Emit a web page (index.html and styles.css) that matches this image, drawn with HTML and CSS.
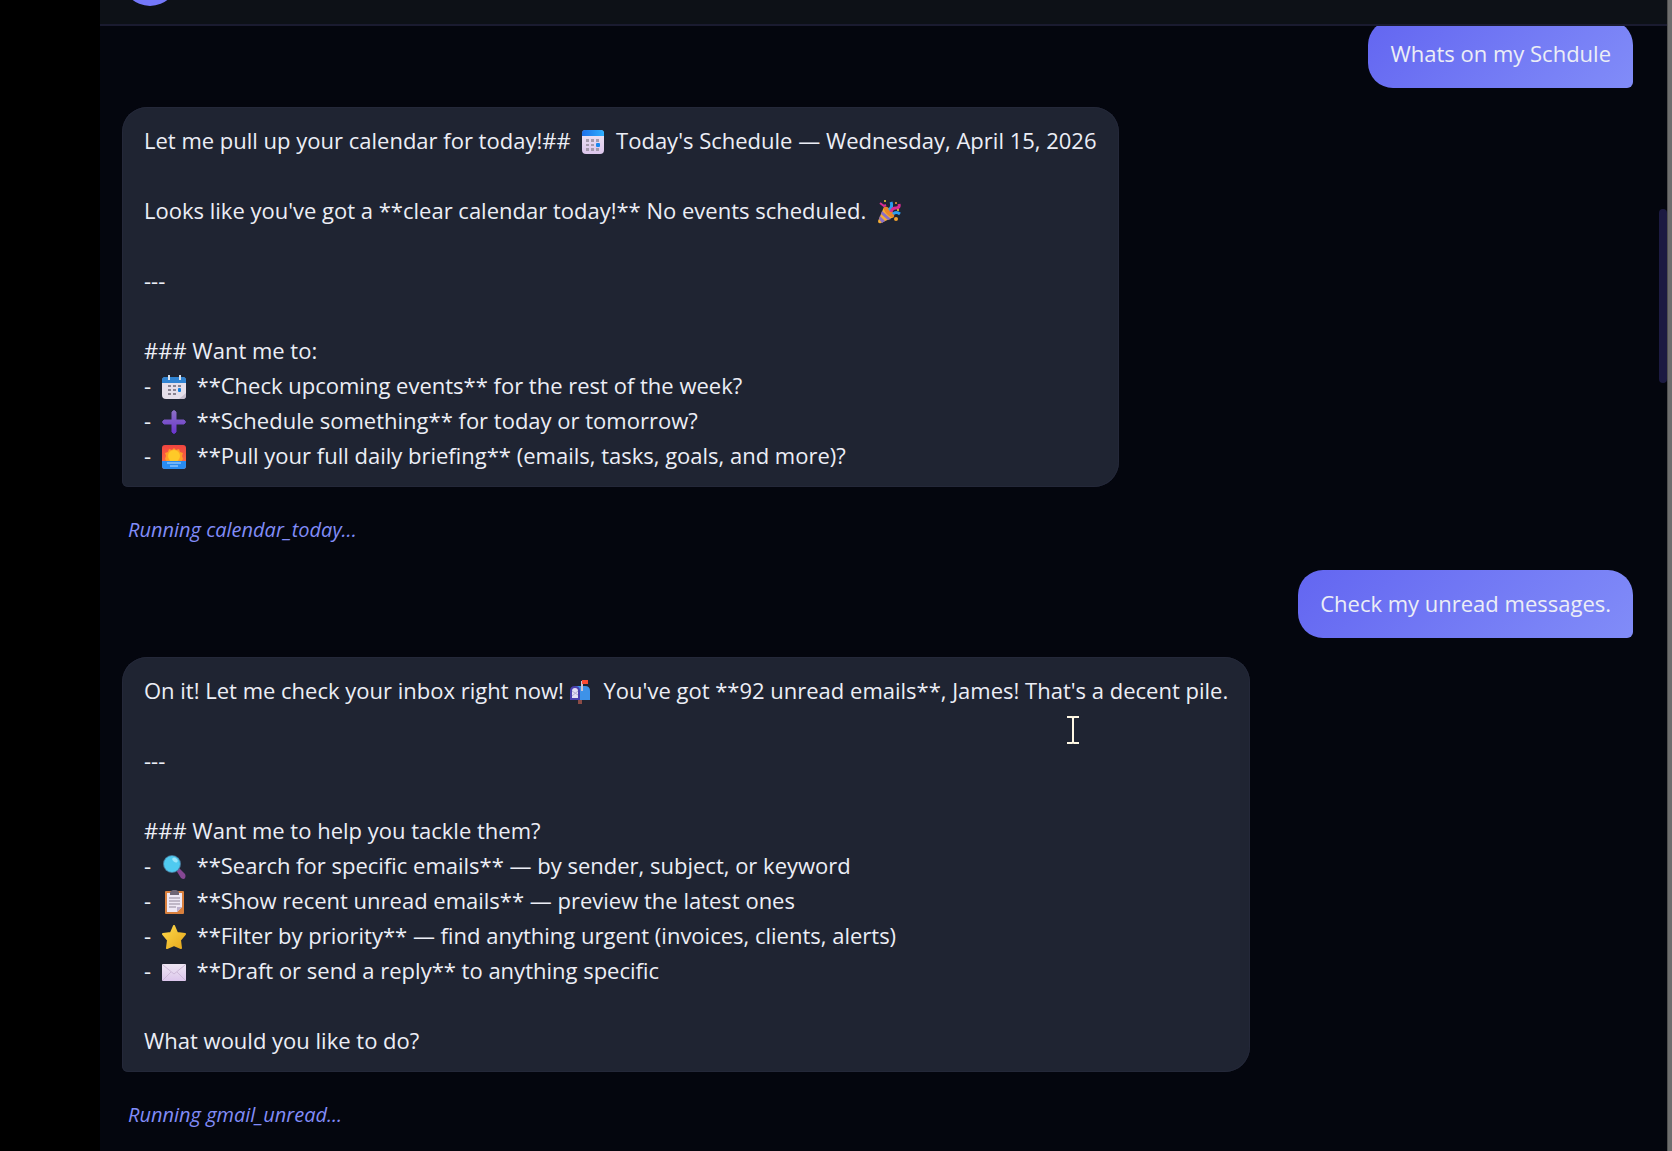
FILE: index.html
```html
<!DOCTYPE html>
<html lang="en">
<head>
<meta charset="utf-8">
<title>Assistant chat</title>
<link rel="stylesheet" href="styles.css">
</head>
<body>
<svg class="defs" aria-hidden="true">
  <defs>
    <linearGradient id="blue" x1="0" y1="0" x2="1" y2="0"><stop offset="0" stop-color="#1d6fe8"/><stop offset="1" stop-color="#2fb0ff"/></linearGradient>
    <linearGradient id="paper" x1="0" y1="0" x2="0" y2="1"><stop offset="0" stop-color="#eee6f3"/><stop offset="1" stop-color="#dcc6ec"/></linearGradient>
    <linearGradient id="plus" x1="0" y1="0" x2="0" y2="1"><stop offset="0" stop-color="#8b70c4"/><stop offset="1" stop-color="#6a35cf"/></linearGradient>
    <linearGradient id="sky" x1="0" y1="0" x2="0" y2="1"><stop offset="0" stop-color="#f0443f"/><stop offset="1" stop-color="#ff7a45"/></linearGradient>
    <linearGradient id="star" x1="0" y1="0" x2="1" y2="1"><stop offset="0" stop-color="#ffd84a"/><stop offset="1" stop-color="#e5a81c"/></linearGradient>
  </defs>
</svg>
<div class="shell">
  <div class="rail"></div>
  <div class="app">
    <header class="topbar"><div class="avatar"></div></header>
    <div class="chat">
      <main class="messages">
        <div class="bubble user"><p>Whats on my Schdule</p></div>
        <div class="bubble bot">
          <p>Let me pull up your calendar for today!## <svg class="emoji" viewBox="0 0 24 24"><rect x="1" width="22" height="24" rx="4" fill="url(#paper)"/><path d="M1 6V3a3 3 0 0 1 3-3h16a3 3 0 0 1 3 3v3z" fill="url(#blue)"/><path d="M5 9h3v3H5zM10 9h3v3h-3zM15 9h3v3h-3zM5 14h3v2H5zM10 14h3v2h-3zM5 18h3v3H5zM10 18h3v3h-3zM15 18h3v3h-3z" fill="#a59bad"/><rect x="15" y="13" width="4" height="4" rx="1" fill="#1988f0"/></svg> Today's Schedule — Wednesday, April 15, 2026</p>
          <p></p>
          <p>Looks like you've got a **clear calendar today!** No events scheduled. <svg class="emoji" viewBox="0 0 24 24"><path d="M7 7L1 21q0 3 3 2l13-6z" fill="#f5ae35"/><path d="M5 11l9 8-3 1-7-6zM3 16l5 5-3 2-3-4z" fill="#8b6fc6"/><ellipse cx="12" cy="12" rx="3" ry="7" transform="rotate(-43 12 12)" fill="#e98528"/><path d="M12 10q4-3 2-8M16 14q3-3 7 0" stroke="#2c9cf0" stroke-width="3" fill="none"/><path d="M14 12q1-4 5-4t3-4" stroke="#d92c93" stroke-width="3" fill="none"/><path d="M3 3l4 3 2-1" stroke="#d92c93" stroke-width="2" fill="none"/><circle cx="8" cy="1" r="1" fill="#ffd33c"/><circle cx="21" cy="10" r="1" fill="#ffd33c"/><circle cx="19" cy="19" r="2" fill="#f4a32e"/><circle cx="19" cy="3" r="1" fill="#f4a32e"/></svg></p>
          <p></p>
          <p>---</p>
          <p></p>
          <p>### Want me to:</p>
          <p>- <svg class="emoji" viewBox="0 0 24 24"><rect y="2" width="24" height="22" rx="4" fill="#e5dfea"/><path d="M0 8V5a3 3 0 0 1 3-3h18a3 3 0 0 1 3 3v3z" fill="#3184d2"/><path d="M7 0v5M18 0v5" stroke="#d9e3ef" stroke-width="2"/><path d="M17 24l7-6v3q0 3-3 3z" fill="#c7bfce"/><path d="M6 10h3v2H6zM11 10h3v2h-3zM16 10h3v2h-3zM6 14h3v2H6zM11 14h3v2h-3zM6 18h3v2H6zM11 18h3v2h-3z" fill="#8a8492"/><rect x="16" y="13" width="3" height="4" rx="1" fill="#1680df"/></svg> **Check upcoming events** for the rest of the week?</p>
          <p>- <svg class="emoji" viewBox="0 0 24 24"><path d="M10 2q2-3 4 0v8h8q3 2 0 4h-8v8q-2 3-4 0v-8H2q-3-2 0-4h8z" fill="url(#plus)" stroke="url(#plus)"/></svg> **Schedule something** for today or tomorrow?</p>
          <p>- <svg class="emoji" viewBox="0 0 24 24"><rect width="24" height="24" rx="3" fill="url(#sky)"/><path d="M12 3l2 2 3-1 1 3 3 1-1 3 1 3-2 3H5l-2-3 1-3-1-3 3-1 1-3 3 1z" fill="#ff9e27"/><circle cx="12" cy="11" r="6" fill="#ffc928"/><path d="M0 16h24v5a3 3 0 0 1-3 3H3a3 3 0 0 1-3-3z" fill="#288bf0"/><path d="M5 18h14M8 21h8" stroke="#b9ddff" stroke-width="1"/></svg> **Pull your full daily briefing** (emails, tasks, goals, and more)?</p>
        </div>
        <div class="status">Running calendar_today...</div>
        <div class="bubble user"><p>Check my unread messages.</p></div>
        <div class="bubble bot">
          <p>On it! Let me check your inbox right now!<svg class="emoji" viewBox="0 0 24 24"><path d="M9 18h4v6H9z" fill="#8c4b45"/><path d="M6 6h10q5 0 5 5v9H6z" fill="#3e92e8"/><path d="M1 11q0-5 5-5t5 5v9H1z" fill="#4a3fae"/><path d="M3 11q0-3 3-3t3 3v7H3z" fill="#e4def5"/><path d="M3 11l6 4M9 11l-6 5" stroke="#b5abd3"/><path d="M12 1h2v10h-2z" fill="#c8c2d4"/><path d="M13 0h6v4h-6z" fill="#fb4a32"/></svg> You've got **92 unread emails**, James! That's a decent pile.</p>
          <p></p>
          <p>---</p>
          <p></p>
          <p>### Want me to help you tackle them?</p>
          <p>- <svg class="emoji" viewBox="0 0 24 24"><path d="M14 15l3-2 6 6q1 2 0 4t-4 0z" fill="#854793"/><circle cx="10" cy="9" r="9" fill="#477b9c"/><circle cx="10" cy="9" r="8" fill="#4fcaf0"/><ellipse cx="13" cy="5" rx="3" ry="2" transform="rotate(40 13 5)" fill="#9be6fa"/></svg> **Search for specific emails** — by sender, subject, or keyword</p>
          <p>- <svg class="emoji" viewBox="0 0 24 24"><rect x="3" y="1" width="19" height="23" rx="1" fill="#d9803d"/><path d="M5 3h15v14l-5 5H5z" fill="#eee8f5"/><path d="M20 17l-5 5v-5z" fill="#bdb1cd"/><path d="M8 5V2q2-2 3-2h3q1 0 3 2v3z" fill="#6e6575"/><path d="M7 8h11M7 11h11M7 14h11M7 17h7" stroke="#91879a"/></svg> **Show recent unread emails** — preview the latest ones</p>
          <p>- <svg class="emoji" viewBox="0 0 24 24"><path d="M12 1l3 7 8 1-5 6 1 8-7-3-7 3 1-8-5-6 8-1z" fill="url(#star)" stroke="url(#star)" stroke-width="2" stroke-linejoin="round"/></svg> **Filter by priority** — find anything urgent (invoices, clients, alerts)</p>
          <p>- <svg class="emoji" viewBox="0 0 24 24"><rect y="4" width="24" height="17" rx="1" fill="url(#paper)"/><path d="M1 5l11 9L23 5M1 20l8-8M23 20l-8-8" stroke="#cdb9d8" fill="none"/></svg> **Draft or send a reply** to anything specific</p>
          <p></p>
          <p>What would you like to do?</p>
          <svg class="pointer" viewBox="0 0 14 28" aria-hidden="true"><path d="M1 1h5l1 1 1-1h5M7 2v24M1 27h5l1-1 1 1h5" stroke="#fff8e4" stroke-width="2" fill="none"/></svg>
        </div>
        <div class="status">Running gmail_unread...</div>
      </main>
      <div class="track"><div class="thumb"></div></div>
    </div>
  </div>
  <div class="edge"></div>
</div>
</body>
</html>
```
FILE: styles.css
```css
* { box-sizing: border-box; }

body {
  margin: 0;
  background: #000;
  color: #eceef6;
  font: 22px/35px "Open Sans", "Noto Sans", sans-serif;
}

.defs { position: absolute; width: 0; height: 0; }

.shell { display: flex; height: 100vh; overflow: hidden; }
.rail { flex: none; width: 100px; }
.edge { flex: none; width: 5px; background: #6e6e6e; border-left: 1px solid #505050; }

.app {
  flex: 1;
  min-width: 0;
  display: flex;
  flex-direction: column;
  background: #04060e;
}

.topbar {
  flex: none;
  display: flex;
  align-items: flex-end;
  height: 26px;
  padding: 0 22px 18px;
  overflow: hidden;
  background: #0d1117;
  border-bottom: 2px solid #1a1b30;
}
.avatar {
  flex: none;
  width: 56px;
  height: 56px;
  border-radius: 50%;
  background: #7478fa;
}

.chat { flex: 1; min-height: 0; display: flex; overflow: hidden; }

.messages {
  flex: 1;
  display: flex;
  flex-direction: column;
  align-items: flex-start;
  gap: 19px;
  margin-top: -6px;
  padding: 0 26px 0 22px;
}

.bubble {
  position: relative;
  flex: none;
  max-width: 80%;
  border-radius: 25px;
}
.bubble p { margin: 0; min-height: 35px; }
.bot {
  padding: 16px 22px 14px;
  background: #1f2432;
  box-shadow: inset 0 0 0 1px #242839;
  border-bottom-left-radius: 6px;
}
.user {
  align-self: flex-end;
  padding: 16px 22px 17px;
  background: linear-gradient(135deg, #6366f1, #818cf8);
  border-bottom-right-radius: 6px;
}

.status {
  flex: none;
  padding: 6px 6px 4px;
  color: #818cf8;
  font-size: 20px;
  font-style: italic;
}

.emoji { width: 24px; height: 24px; margin: 0 5px; vertical-align: -5px; }

.pointer { position: absolute; top: 59px; right: 170px; width: 14px; height: 28px; }

.track { flex: none; width: 8px; padding-top: 183px; }
.thumb { height: 174px; border-radius: 4px; background: #1c1a42; }
```
